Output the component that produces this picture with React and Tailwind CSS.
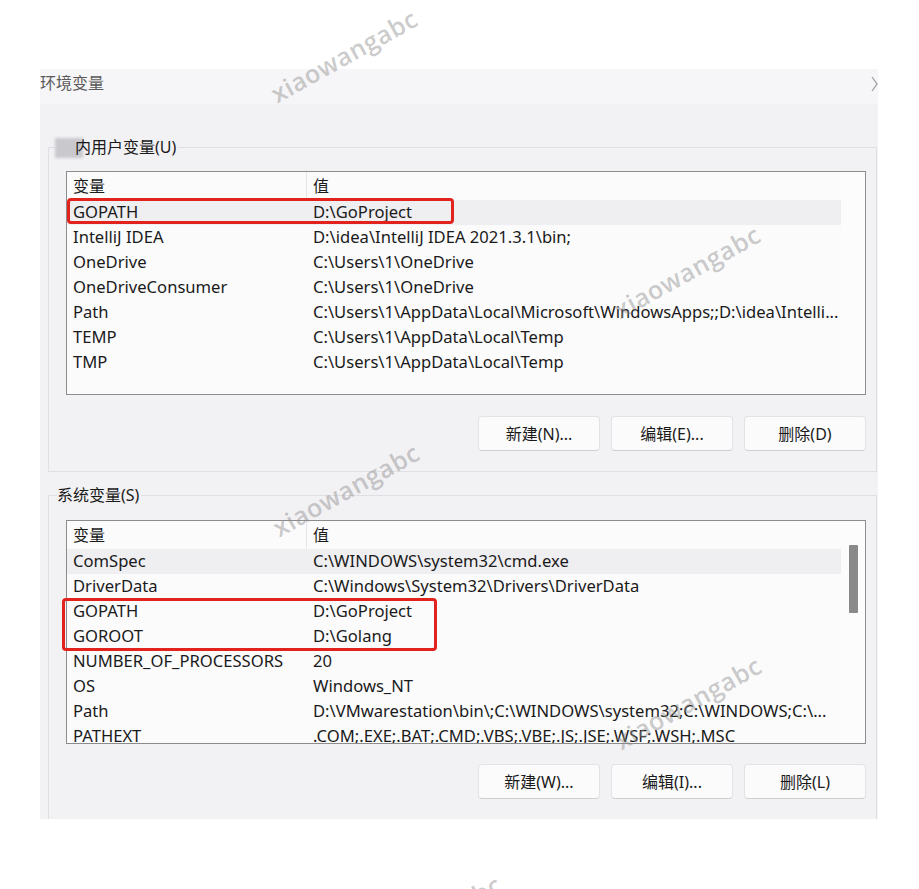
import React from "react";

const FONT = { fontFamily: '"Noto Sans", "Noto Sans CJK SC", sans-serif' };

const userRows = [
  ["GOPATH", "D:\\GoProject", true],
  ["IntelliJ IDEA", "D:\\idea\\IntelliJ IDEA 2021.3.1\\bin;"],
  ["OneDrive", "C:\\Users\\1\\OneDrive"],
  ["OneDriveConsumer", "C:\\Users\\1\\OneDrive"],
  ["Path", "C:\\Users\\1\\AppData\\Local\\Microsoft\\WindowsApps;;D:\\idea\\Intelli..."],
  ["TEMP", "C:\\Users\\1\\AppData\\Local\\Temp"],
  ["TMP", "C:\\Users\\1\\AppData\\Local\\Temp"],
];

const sysRows = [
  ["ComSpec", "C:\\WINDOWS\\system32\\cmd.exe", true],
  ["DriverData", "C:\\Windows\\System32\\Drivers\\DriverData"],
  ["GOPATH", "D:\\GoProject"],
  ["GOROOT", "D:\\Golang"],
  ["NUMBER_OF_PROCESSORS", "20"],
  ["OS", "Windows_NT"],
  ["Path", "D:\\VMwarestation\\bin\\;C:\\WINDOWS\\system32;C:\\WINDOWS;C:\\..."],
  ["PATHEXT", ".COM;.EXE;.BAT;.CMD;.VBS;.VBE;.JS;.JSE;.WSF;.WSH;.MSC"],
];

function VarTable({ rows, scrollbar, children }) {
  return (
    <div className="relative h-[224px] border border-[#8c8c8c] bg-[#fbfbfc] flex">
      <div className="flex-1 flex flex-col overflow-hidden">
        <div className="flex h-[28px] shrink-0 items-center text-[16px] text-[#1a1a1a]">
          <div className="w-[240px] h-full flex items-center pl-[6px] border-r border-[#e6e6e8]">变量</div>
          <div className="flex-1 pl-[6px]">值</div>
        </div>
        {rows.map(([k, v, sel], i) => (
          <div
            key={i}
            className={`flex h-[25px] shrink-0 items-center text-[16.6px] text-[#1a1a1a] whitespace-nowrap ${sel ? "bg-[#efeef1]" : ""}`}
          >
            <div className="w-[240px] pl-[6px]">{k}</div>
            <div className="flex-1 pl-[6px]">{v}</div>
          </div>
        ))}
      </div>
      <div className="w-[24px] shrink-0 flex justify-center pt-[24px] bg-[#fcfcfd]">
        {scrollbar && <div className="w-[9px] h-[68px] bg-[#8a8a8a] rounded-[1px]" />}
      </div>
      {children}
    </div>
  );
}

function Btn({ children }) {
  return (
    <div className="w-[122px] h-[35px] flex items-center justify-center rounded-[4px] bg-[#fbfbfb] border border-[#e3e3e5] border-b-[#cfcfd1] text-[16px] text-[#1a1a1a]">
      {children}
    </div>
  );
}

function Watermark({ className }) {
  return (
    <div
      className={`absolute -translate-x-1/2 -translate-y-1/2 -rotate-[29deg] text-[25px] font-semibold tracking-[0.5px] text-[#8c8c8c]/45 whitespace-nowrap pointer-events-none ${className}`}
      style={{ fontFamily: '"Open Sans", sans-serif' }}
    >
      xiaowangabc
    </div>
  );
}

export default function App() {
  return (
    <div className="relative w-[919px] h-[889px] overflow-hidden bg-white pt-[69px] pl-[40px]" style={FONT}>
      <div className="w-[838px] h-[750px] overflow-hidden bg-[#f2f1f4] flex flex-col">
        {/* title bar */}
        <div className="h-[35px] shrink-0 bg-[#f6f5f7] flex justify-between items-start pt-[2px]">
          <div className="text-[16px] leading-[24px] text-[#5a5a5a]">环境变量</div>
          <svg width="7" height="16" viewBox="0 0 7 16" className="mt-[5px]">
            <path d="M1 1 L6 8 L1 15" fill="none" stroke="#9a9a9a" strokeWidth="1.2" />
          </svg>
        </div>

        <div className="pl-[8px] pr-[1px] pt-[31px]">
          {/* user group */}
          <fieldset className="border border-[#e0dfe3] pl-[17px] pr-[10px] pb-[20px] m-0">
            <legend className="relative -ml-[11px] pl-[20px] pr-[2px] h-[24px] leading-[24px] text-[16px] text-[#1a1a1a]">
              <span className="absolute left-0 top-[3px] w-[28px] h-[20px] bg-[#c9c8cd] blur-[1.5px]" />
              <span className="relative">内用户变量(U)</span>
            </legend>
            <div className="mt-[12px]">
              <VarTable rows={userRows}>
                <div className="absolute left-0 top-[26px] w-[387px] h-[26px] border-[3px] border-[#e2231d] rounded-[4px]" />
              </VarTable>
            </div>
            <div className="mt-[21px] flex justify-end gap-[11px]">
              <Btn>新建(N)...</Btn>
              <Btn>编辑(E)...</Btn>
              <Btn>删除(D)</Btn>
            </div>
          </fieldset>

          {/* system group */}
          <fieldset className="mt-[11px] border border-b-0 border-[#e0dfe3] pl-[17px] pr-[10px] pb-[30px] m-0">
            <legend className="-ml-[9px] pr-[2px] h-[24px] leading-[24px] text-[16px] text-[#1a1a1a]">系统变量(S)</legend>
            <div className="mt-[13px]">
              <VarTable rows={sysRows} scrollbar>
                <div className="absolute left-[-5px] top-[77px] w-[375px] h-[53px] border-[3px] border-[#e2231d] rounded-[4px]" />
              </VarTable>
            </div>
            <div className="mt-[20px] flex justify-end gap-[11px]">
              <Btn>新建(W)...</Btn>
              <Btn>编辑(I)...</Btn>
              <Btn>删除(L)</Btn>
            </div>
          </fieldset>
        </div>
      </div>

      <Watermark className="left-[344px] top-[56px]" />
      <Watermark className="left-[687px] top-[272px]" />
      <Watermark className="left-[346px] top-[490px]" />
      <Watermark className="left-[688px] top-[703px]" />
      <Watermark className="left-[428px] top-[922px]" />
    </div>
  );
}
